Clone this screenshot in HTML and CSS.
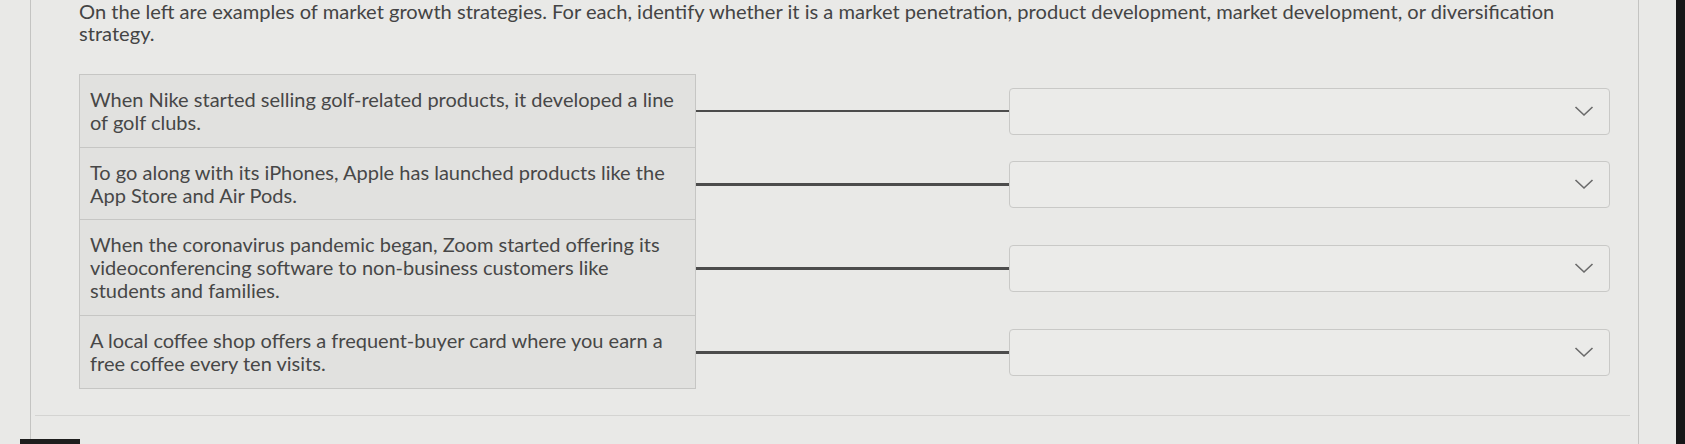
FILE: index.html
```html
<!DOCTYPE html>
<html lang="en">
<head>
<meta charset="utf-8">
<title>Market growth strategies</title>
<link rel="stylesheet" href="styles.css">
</head>
<body>
<div class="screen">
  <div class="panel">
    <p class="prompt">On the left are examples of market growth strategies. For each, identify whether it is a market penetration, product development, market development, or diversification strategy.</p>
    <div class="matching">
      <div class="cell">When Nike started selling golf-related products, it developed a line of golf clubs.</div>
      <div class="link"><span class="wire"></span></div>
      <div class="pick"><div class="select"><svg class="chev" viewBox="0 0 20 12" width="20" height="12"><path d="M1.5 2 L10 10 L18.5 2" fill="none" stroke="#6a6a6a" stroke-width="1.6"/></svg></div></div>

      <div class="cell">To go along with its iPhones, Apple has launched products like the App Store and Air Pods.</div>
      <div class="link"><span class="wire"></span></div>
      <div class="pick"><div class="select"><svg class="chev" viewBox="0 0 20 12" width="20" height="12"><path d="M1.5 2 L10 10 L18.5 2" fill="none" stroke="#6a6a6a" stroke-width="1.6"/></svg></div></div>

      <div class="cell">When the coronavirus pandemic began, Zoom started offering its videoconferencing software to non-business customers like students and families.</div>
      <div class="link"><span class="wire"></span></div>
      <div class="pick"><div class="select"><svg class="chev" viewBox="0 0 20 12" width="20" height="12"><path d="M1.5 2 L10 10 L18.5 2" fill="none" stroke="#6a6a6a" stroke-width="1.6"/></svg></div></div>

      <div class="cell">A local coffee shop offers a frequent-buyer card where you earn a free coffee every ten visits.</div>
      <div class="link"><span class="wire"></span></div>
      <div class="pick"><div class="select"><svg class="chev" viewBox="0 0 20 12" width="20" height="12"><path d="M1.5 2 L10 10 L18.5 2" fill="none" stroke="#6a6a6a" stroke-width="1.6"/></svg></div></div>
    </div>
    <div class="divider"></div>
    <div class="submit"></div>
  </div>
</div>
<div class="bezel"></div>
</body>
</html>
```
FILE: styles.css
```css
html, body {
  margin: 0;
  padding: 0;
  height: 444px;
  overflow: hidden;
}
body {
  display: flex;
  background: #e9e9e7;
  font-family: Lato, "Open Sans", sans-serif;
  color: #4a4a4a;
}
.screen {
  flex: 1;
  display: flex;
}
.panel {
  margin-left: 30px;
  width: 1609px;
  height: 444px;
  box-sizing: border-box;
  border-left: 1.5px solid #c4c4c2;
  border-right: 1.5px solid #c4c4c2;
  padding-left: 48px;
  display: flex;
  flex-direction: column;
}
.prompt {
  margin: 0;
  font-size: 20.1px;
  line-height: 22px;
  color: #444444;
  width: 1520px;
}
.matching {
  margin-top: 30px;
  display: grid;
  grid-template-columns: 617px 313px 601px;
  align-items: center;
}
.cell {
  box-sizing: border-box;
  background: #e1e1df;
  border: 1.5px solid #c6c6c4;
  padding: 13px 10px 13px 10px;
  font-size: 20px;
  line-height: 23px;
  color: #474747;
  margin-top: -1.5px;
}
.cell:first-child {
  margin-top: 0;
}
.wire {
  display: block;
  height: 2.5px;
  background: #4c4c4c;
}
.select {
  box-sizing: border-box;
  height: 47px;
  border: 1.5px solid #c9c9c7;
  border-radius: 4px;
  background: #ebebe9;
  display: flex;
  align-items: center;
  justify-content: flex-end;
  padding-right: 15px;
}
.chev {
  display: block;
}
.divider {
  margin-top: 26px;
  margin-left: -44px;
  margin-right: 8px;
  height: 1px;
  background: #d4d4d2;
}
.submit {
  margin-top: 24px;
  margin-left: -59px;
  width: 60px;
  height: 10px;
  background: #1e1e1e;
}
.bezel {
  width: 9px;
  background: #161718;
}
```
